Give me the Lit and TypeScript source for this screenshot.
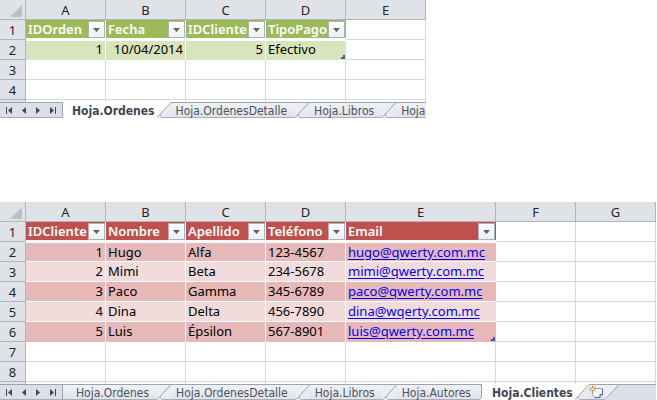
import { LitElement, html, css, nothing } from "lit";
import { customElement, property } from "lit/decorators.js";
import { classMap } from "lit/directives/class-map.js";

interface SheetData {
  theme: "green" | "red";
  columns: string[];
  wideColumn?: string;
  rowCount: number;
  fields: string[];
  records: (string | number)[][];
  tabs: string[];
  active: string;
  canInsert: boolean;
}

const ORDERS: SheetData = {
  theme: "green",
  columns: ["A", "B", "C", "D", "E"],
  rowCount: 4,
  fields: ["IDOrden", "Fecha", "IDCliente", "TipoPago"],
  records: [[1, "10/04/2014", 5, "Efectivo"]],
  tabs: ["Hoja.Ordenes", "Hoja.OrdenesDetalle", "Hoja.Libros", "Hoja.Autores"],
  active: "Hoja.Ordenes",
  canInsert: false,
};

const CLIENTS: SheetData = {
  theme: "red",
  columns: ["A", "B", "C", "D", "E", "F", "G"],
  wideColumn: "E",
  rowCount: 8,
  fields: ["IDCliente", "Nombre", "Apellido", "Teléfono", "Email"],
  records: [
    [1, "Hugo", "Alfa", "123-4567", "hugo@qwerty.com.mc"],
    [2, "Mimi", "Beta", "234-5678", "mimi@qwerty.com.mc"],
    [3, "Paco", "Gamma", "345-6789", "paco@qwerty.com.mc"],
    [4, "Dina", "Delta", "456-7890", "dina@wqerty.com.mc"],
    [5, "Luis", "Épsilon", "567-8901", "luis@qwerty.com.mc"],
  ],
  tabs: ["Hoja.Ordenes", "Hoja.OrdenesDetalle", "Hoja.Libros", "Hoja.Autores", "Hoja.Clientes"],
  active: "Hoja.Clientes",
  canInsert: true,
};

@customElement("sheet-grid")
export class SheetGrid extends LitElement {
  @property({ attribute: false }) data!: SheetData;

  static styles = css`
    :host {
      display: block;
      font: 13px/18px "Noto Sans", "Open Sans", sans-serif;
      color: #000;
    }
    .grid {
      width: 100%;
      table-layout: fixed;
      border-collapse: separate;
      border-spacing: 0;
    }
    .corner-col {
      width: 26px;
    }
    .col {
      width: 80px;
    }
    .wide {
      width: 150px;
    }
    tr {
      height: 20px;
    }
    th,
    td {
      box-sizing: border-box;
      height: 20px;
      padding: 0 2px;
      border-right: 1px solid #d8d9da;
      border-bottom: 1px solid #d8d9da;
      font-weight: 400;
      text-align: left;
      white-space: nowrap;
      overflow: hidden;
    }
    .head {
      padding: 0;
      background: #dfe3e8;
      border-color: #b1b5ba;
      color: #262626;
      text-align: center;
    }
    .triangle {
      display: block;
      width: 12px;
      height: 12px;
      margin: 2px 3px 0 auto;
    }
    .field {
      position: relative;
      color: #fff;
      font-weight: 600;
      line-height: 17px;
      border-right-color: #fff;
      border-bottom: 2px solid #fff;
    }
    .green .field {
      background: #9bbb59;
    }
    .red .field {
      background: #c0504d;
    }
    .field.end {
      border-right: 0;
    }
    .filter {
      position: absolute;
      right: 0;
      bottom: 0;
      display: flex;
      align-items: center;
      justify-content: center;
      box-sizing: border-box;
      width: 17px;
      height: 17px;
      padding: 0;
      border: 1px solid #a9b1bb;
      background: linear-gradient(#fff, #eceff3);
    }
    .field.end .filter {
      right: 1px;
    }
    .rec {
      border-color: #fff;
      line-height: 17px;
    }
    .rec.first {
      border-top: 1px solid #fff;
    }
    .green .rec {
      background: #d8e4bc;
    }
    .red .rec {
      background: #e6b8b7;
    }
    .red .rec.alt {
      background: #f2dcdb;
    }
    .rec.last {
      border-bottom: 0;
      padding-bottom: 2px;
    }
    .rec.end {
      border-right: 0;
    }
    .num {
      text-align: right;
    }
    .rec.last.end {
      position: relative;
    }
    .handle {
      position: absolute;
      right: 1px;
      bottom: 1px;
      width: 4px;
      height: 4px;
    }
    .mail {
      color: #00f;
      text-decoration: underline;
      text-underline-offset: 2px;
    }
    .peek,
    .peek td,
    .peek th {
      height: 2px;
      border-bottom: 0;
      padding: 0;
      line-height: 0;
    }
  `;

  private cell(row: number, col: number) {
    const { fields, records } = this.data;
    if (col >= fields.length || row > records.length) return html`<td></td>`;
    const end = col === fields.length - 1;
    if (row === 0) {
      return html`<th class=${classMap({ field: true, end })} scope="col">
        ${fields[col]}
        <button class="filter" aria-label="Filtrar ${fields[col]}">
          <svg width="7" height="4" viewBox="0 0 7 4" aria-hidden="true"><path d="M0 0H7L3.5 4Z" fill="#5b5f66" /></svg>
        </button>
      </th>`;
    }
    const value = records[row - 1][col];
    const text = String(value);
    const last = row === records.length;
    const classes = {
      rec: true,
      first: row === 1,
      alt: row % 2 === 0,
      last,
      end,
      num: typeof value === "number" || text.includes("/"),
    };
    return html`<td class=${classMap(classes)}>${text.includes("@")
        ? html`<a class="mail" href="mailto:${text}">${text}</a>`
        : text}${last && end
        ? html`<svg class="handle" viewBox="0 0 4 4" aria-hidden="true"><path d="M2 0H4V4H0V2H2Z" fill="#4458b0" /></svg>`
        : nothing}</td>`;
  }

  render() {
    const { theme, columns, wideColumn, rowCount } = this.data;
    const rows = Array.from({ length: rowCount }, (_, i) => i);
    return html`<table class="grid ${theme}">
      <colgroup>
        <col class="corner-col" />
        ${columns.map((c, i) =>
          i === columns.length - 1
            ? html`<col />`
            : html`<col class=${c === wideColumn ? "wide" : "col"} />`)}
      </colgroup>
      <thead>
        <tr>
          <td class="head">
            <svg class="triangle" viewBox="0 0 12 12" aria-hidden="true"><path d="M12 0V12H0Z" fill="#bcc0c6" /></svg>
          </td>
          ${columns.map((c) => html`<th class="head" scope="col">${c}</th>`)}
        </tr>
      </thead>
      <tbody>
        ${rows.map((r) => html`<tr>
          <th class="head" scope="row">${r + 1}</th>
          ${columns.map((_, c) => this.cell(r, c))}
        </tr>`)}
        <tr class="peek">
          <th class="head"></th>
          ${columns.map(() => html`<td></td>`)}
        </tr>
      </tbody>
    </table>`;
  }
}

const NAV = [
  { label: "Primera hoja", d: "M0 0H1V7H0ZM6 0V7L2 3.5Z" },
  { label: "Hoja anterior", d: "M5 0V7L1 3.5Z" },
  { label: "Hoja siguiente", d: "M1 0V7L5 3.5Z" },
  { label: "Última hoja", d: "M0 0V7L4 3.5ZM5 0H6V7H5Z" },
];

@customElement("sheet-tabs")
export class SheetTabs extends LitElement {
  @property({ attribute: false }) data!: SheetData;

  static styles = css`
    :host {
      display: flex;
      box-sizing: border-box;
      height: 16px;
      overflow: hidden;
      font: 12px/17px "DejaVu Sans Condensed", "Noto Sans", sans-serif;
      color: #4c5360;
      background: linear-gradient(#9da3ac 1px, #dbdfe7 1px);
    }
    button {
      margin: 0;
      padding: 0;
      border: 0;
      background: none;
      font: inherit;
      color: inherit;
    }
    .nav {
      flex: none;
      display: grid;
      grid-template-columns: repeat(4, 1fr);
      box-sizing: border-box;
      width: 62px;
      padding: 1px 2px 0;
      border-bottom: 1px solid #a9aeb6;
    }
    .nav button {
      display: flex;
      align-items: center;
      justify-content: center;
    }
    .strip {
      display: flex;
      border-left: 1px solid #9da3ac;
    }
    .tab {
      flex: none;
      display: flex;
      height: 16px;
      white-space: nowrap;
    }
    .label {
      box-sizing: border-box;
      height: 16px;
      padding: 0 8px 0 5px;
      border-top: 1px solid #9da3ac;
      border-bottom: 1px solid #a9aeb6;
      background: linear-gradient(#f0f2f5, #dfe3e9);
    }
    .tab:first-child .label {
      padding-left: 13px;
    }
    .active .label {
      padding: 0 2px 0 10px;
      border-color: #fff;
      background: #fff;
      color: #3f4754;
      font-weight: 700;
    }
    .active:first-child .label {
      padding-left: 9px;
    }
    .insert .label {
      display: flex;
      align-items: center;
      padding: 0;
    }
    .edge {
      flex: none;
      height: 16px;
    }
  `;

  /** Slanted seam between a tab and whatever lies to its right. */
  private seam(active: boolean, outer: boolean) {
    return html`<svg class="edge" width="14" height="16" viewBox="0 0 14 16" aria-hidden="true">
      <path d="M0 0H14V16H0Z" fill=${outer ? "#dbdfe7" : "#e8ebef"} />
      <path d="M0 0H14L0 16Z" fill=${active ? "#fff" : "#eceef2"} />
      ${active ? nothing : html`<svg><path d="M0 0.5H14" stroke="#9da3ac" /></svg>`}
      ${outer ? nothing : html`<svg><path d="M3.5 12.500V14L5 15.500H14" fill="none" stroke="#a9aeb6" /></svg>`}
      <path d="M14 0.500L0 15.500" stroke="#9da3ac" />
    </svg>`;
  }

  private roundedEnd() {
    return html`<svg class="edge" width="3" height="16" viewBox="0 0 3 16" aria-hidden="true">
      <path d="M0 0H3V16H0Z" fill="#fff" />
      <path d="M0 0.500H2.500V13.500L0.500 15.500H0Z" fill="#e6e9ee" />
      <path d="M0 0.500H2.500V13.500L0.500 15.500H0" fill="none" stroke="#9da3ac" />
    </svg>`;
  }

  render() {
    const { tabs, active, canInsert } = this.data;
    return html`
      <div class="nav">
        ${NAV.map((n) => html`<button aria-label=${n.label}>
          <svg width="6" height="7" viewBox="0 0 6 7" aria-hidden="true"><path d=${n.d} fill="#3f4857" /></svg>
        </button>`)}
      </div>
      <div class="strip" role="tablist">
        ${tabs.map((t, i) => html`<button
          class=${classMap({ tab: true, active: t === active })}
          role="tab"
          aria-selected=${t === active ? "true" : "false"}
        >
          <span class="label">${t}</span>
          ${tabs[i + 1] === active ? this.roundedEnd() : this.seam(t === active, false)}
        </button>`)}
        ${canInsert
          ? html`<button class="tab insert" aria-label="Insertar hoja de cálculo">
              <span class="label">
                <svg width="16" height="14" viewBox="0 0 16 14" aria-hidden="true">
                  <path d="M3.5 3.500H13.500V9.500L11 12.500H6L3.500 10Z" fill="#f4f7fd" stroke="#8fa3cf" />
                  <path d="M13.500 4V9.500H11V12.500H5.500" fill="none" stroke="#4a62a6" />
                  <path d="M3.500 0.500V7.500M0 4H7M1 1.500L6 6.500M6 1.500L1 6.500" stroke="#e08a2c" />
                  <path d="M2.500 3H4.500V5H2.500Z" fill="#fff3c4" />
                </svg>
              </span>
              ${this.seam(false, true)}
            </button>`
          : nothing}
      </div>`;
  }
}

@customElement("app-root")
export class AppRoot extends LitElement {
  static styles = css`
    :host {
      display: flex;
      flex-direction: column;
      gap: 84px;
      padding-right: 1px;
      background: #fff;
    }
    .orders {
      width: 65%;
    }
  `;

  render() {
    return html`
      <section class="orders">
        <sheet-grid .data=${ORDERS}></sheet-grid>
        <sheet-tabs .data=${ORDERS}></sheet-tabs>
      </section>
      <section>
        <sheet-grid .data=${CLIENTS}></sheet-grid>
        <sheet-tabs .data=${CLIENTS}></sheet-tabs>
      </section>`;
  }
}
